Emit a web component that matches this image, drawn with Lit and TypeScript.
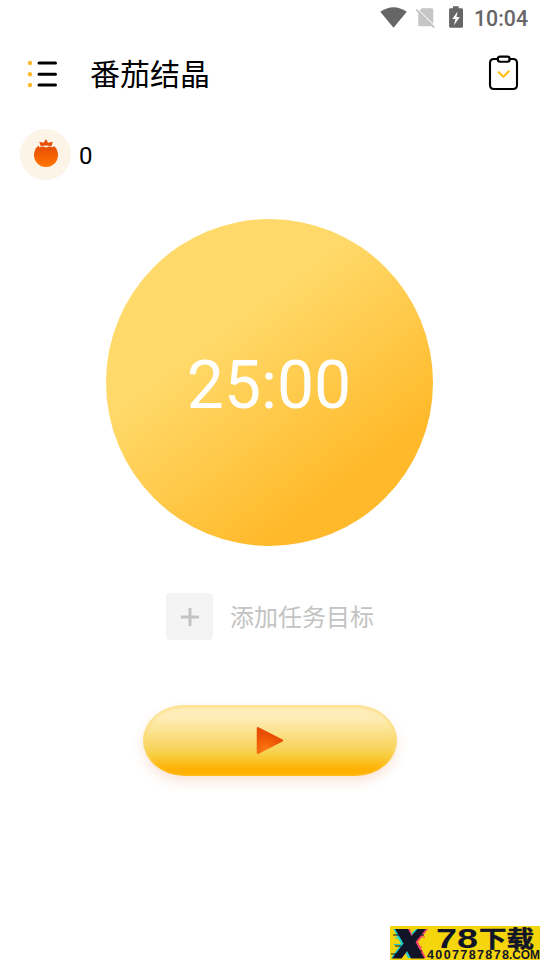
import { LitElement, html, css } from "lit";
import { customElement, property } from "lit/decorators.js";

@customElement("status-bar")
class StatusBar extends LitElement {
  static styles = css`
    :host { display: flex; height: 37px; align-items: center; justify-content: flex-end; padding-right: 12px; box-sizing: border-box; }
    svg { display: block; }
    .time { font: 500 21.3px/37px Roboto, sans-serif; color: #666; margin-left: 10px; width: 54px; white-space: nowrap; }
  `;
  render() {
    return html`
      <svg width="84" height="37" viewBox="380 0 84 37">
        <path d="M380.3 11.8Q393.5 2.6 406.8 11.8L393.5 27.7Z" fill="#666" />
        <path d="M422 8.2H431.8Q433.3 8.2 433.3 9.7V24L419.5 10.4ZM418.2 12L432.2 26.2H419.7Q418.2 26.2 418.2 24.7Z" fill="#c6c6c6" />
        <path d="M416.3 9.5L434.2 27.4" stroke="#bdbdbd" stroke-width="1.6" />
        <path d="M453 6.2H458.7V8.2H461.6Q463 8.2 463 9.6V26.4Q463 27.8 461.6 27.8H450.5Q449.1 27.8 449.1 26.4V9.6Q449.1 8.2 450.5 8.2H453Z" fill="#666" />
        <path d="M457.5 11.4L452.3 19H455.4L454 25.2L459.8 17H456.5Z" fill="#fff" />
      </svg>
      <span class="time">10:04</span>
    `;
  }
}

@customElement("site-badge")
class SiteBadge extends LitElement {
  static styles = css`
    :host { display: block; width: 150px; height: 34px; background: #f5d50c; }
    svg { display: block; }
    .name { font: 700 22.5px "Noto Sans CJK SC", sans-serif; fill: #111426; stroke: #111426; stroke-width: .5px; }
    .digits { font: bold 27px "Liberation Sans", sans-serif; fill: #111426; }
    .site { font: bold 12.5px "Liberation Sans", sans-serif; fill: #111426; }
  `;
  render() {
    return html`
      <svg width="150" height="34" viewBox="0 0 150 34">
        <path d="M3.5 3H16L19 9L26 3H32L23 16L31 32H18L15 26L10 32H1L11 18Z" fill="#19cfd0" />
        <path d="M9 3H20L22 9L29 3H38L28 16L36 32H23L18 24L12 32H6L16 17Z" fill="#f6436e" />
        <path d="M5 3H18L21.5 10L27.5 3H36L25.5 16L34.5 32.5H21L17 25L11.5 32.5H2L13.5 17.5Z" fill="#111426" />
        <path d="M3 9H9M28 9H34M5 20H11M27 25H32M1 28H7" stroke="#111426" stroke-width="1.2" />
        <path d="M4 18.5H11M5 12H9" stroke="#19cfd0" />
        <path d="M31 11H35M28 21H32" stroke="#f6436e" />
        <text class="digits" x="46" y="21.8" textLength="42" lengthAdjust="spacingAndGlyphs">78</text>
        <text class="name" x="89" y="20.8" textLength="55" lengthAdjust="spacingAndGlyphs">下载</text>
        <text class="site" x="37" y="33.3" textLength="82" lengthAdjust="spacing">4007787878</text>
        <text class="site" x="119" y="33.3" textLength="31" lengthAdjust="spacingAndGlyphs">.COM</text>
      </svg>
    `;
  }
}

@customElement("app-root")
class AppRoot extends LitElement {
  @property() remaining = "25:00";
  @property({ type: Number }) crystals = 0;

  static styles = css`
    :host {
      display: flex; flex-direction: column; position: relative; box-sizing: border-box;
      width: 540px; height: 960px; overflow: hidden; background: #fff; color: #000;
      font-family: Roboto, "Noto Sans CJK SC", sans-serif;
    }
    svg { display: block; flex: none; }
    header { display: flex; height: 74px; align-items: center; padding: 0 20px 0 26px; }
    h1 { flex: 1; margin: 0 0 0 30px; padding-top: 2px; font-size: 30px; font-weight: 400; line-height: 44px; }
    header svg:last-child { margin-bottom: 2px; }
    .count { display: flex; align-items: center; height: 52px; margin: 17px 0 0 20px; gap: 8px; font-size: 24px; }
    .count span { padding-top: 3px; }
    .timer {
      display: flex; align-items: center; justify-content: center; align-self: center;
      width: 327px; height: 327px; margin: 38.7px 1px 0 0; box-sizing: border-box; padding: 8px 1px 0 0;
      border-radius: 50%; background: linear-gradient(143deg, #ffda6b 34%, #ffb92a 78%);
      color: #fff; font-size: 66px; line-height: 80px;
    }
    .task { display: flex; align-items: center; align-self: center; gap: 17px; margin-top: 47px; color: #c3c3c3; font-size: 24px; line-height: 36px; }
    .task > span:last-child { padding-top: 4px; }
    .plus { display: grid; place-items: center; width: 47px; height: 47px; border-radius: 4px; background: #f4f4f4; }
    .plus svg { margin: 1px 0 0 1px; }
    .start {
      display: block; align-self: center; width: 254px; height: 71px; margin-top: 65.5px; padding: 0; border: 0; border-radius: 42px / 36px;
      background: linear-gradient(#ffedb9 0%, #ffedb9 17%, #f8d45b 62%, #f9ce43 70%, #ffb000 91%, #ffb000 100%);
      box-shadow: inset 0 1px 4px #fbd970, 0 6px 12px rgba(226, 127, 63, .2);
    }
    site-badge { position: absolute; right: 0; bottom: 0; }
  `;

  render() {
    return html`
      <status-bar></status-bar>
      <header>
        <svg width="34" height="34" viewBox="26 57 34 34">
          <g fill="#fdb92c"><circle cx="30" cy="63" r="2.2" /><circle cx="30" cy="74.2" r="2.2" /><circle cx="30" cy="85" r="2.2" /></g>
          <path d="M39 63H55.5M39 74.3H55.5M39 85H55.5" stroke="#000" stroke-width="3" stroke-linecap="round" />
        </svg>
        <h1>番茄结晶</h1>
        <svg width="34" height="38" viewBox="486 54 34 38" fill="none" stroke-linecap="round" stroke-linejoin="round">
          <path d="M498 59H494Q490 59 490 63V85Q490 89 494 89H513Q517 89 517 85V63Q517 59 513 59H509.5" stroke="#000" stroke-width="2.1" />
          <rect x="497.7" y="56.6" width="12" height="5.1" rx="2.5" stroke="#000" stroke-width="2.1" />
          <path d="M498.8 72.2L503.4 76.8L508.8 71.3" stroke="#ffbd19" stroke-width="2.2" />
        </svg>
      </header>
      <div class="count">
        <svg width="51" height="52" viewBox="20 128 51 52">
          <defs><linearGradient id="tomato" x2="0" y2="1"><stop offset=".15" stop-color="#e94e06" /><stop offset="1" stop-color="#ff7600" /></linearGradient></defs>
          <circle cx="45.5" cy="154.5" r="25.5" fill="#fbf4e7" />
          <circle cx="46" cy="155" r="12" fill="url(#tomato)" />
          <path d="M38 142.5H54V145.8L53 147.3L49 146.6L46 147.6L43 146.6L39 147.3Z" fill="#fbf4e7" />
          <path d="M39.2 141.8L43.7 142.8L45.9 139L48 142.8L52.7 141.8L51.5 146.3Q46 144.9 40.8 146.3Z" fill="#e94e06" />
        </svg>
        <span>${this.crystals}</span>
      </div>
      <div class="timer">${this.remaining}</div>
      <div class="task">
        <span class="plus"><svg width="20" height="20" viewBox="0 0 20 20"><path d="M10 1V19M1 10H19" stroke="#c3c3c3" stroke-width="3" /></svg></span>
        <span>添加任务目标</span>
      </div>
      <button class="start" aria-label="开始">
        <svg width="254" height="71" viewBox="143 705 254 71">
          <defs><radialGradient id="play" cx=".3" cy=".9" r=".65"><stop stop-color="#fc7916" /><stop offset=".7" stop-color="#f15c06" /><stop offset="1" stop-color="#e94f04" /></radialGradient></defs>
          <path d="M258 728.3L282 740.5L258 752.6Z" fill="url(#play)" stroke="url(#play)" stroke-width="2.5" stroke-linejoin="round" />
        </svg>
      </button>
      <site-badge></site-badge>
    `;
  }
}
